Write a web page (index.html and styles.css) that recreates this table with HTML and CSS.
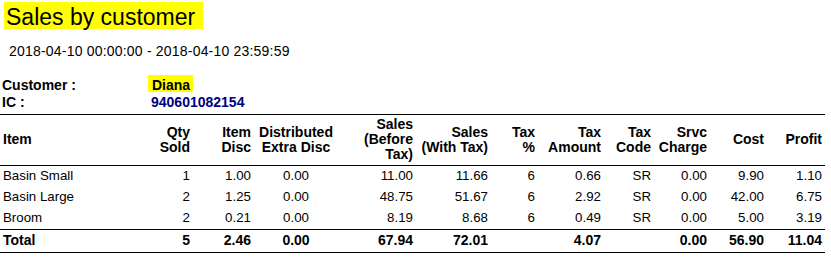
FILE: index.html
```html
<!DOCTYPE html>
<html>
<head>
<meta charset="utf-8">
<title>Sales by customer</title>
<link rel="stylesheet" href="styles.css">
</head>
<body>
<div class="report">
  <div class="title-row"><span class="title">Sales by customer</span></div>
  <div class="period">2018-04-10 00:00:00 - 2018-04-10 23:59:59</div>
  <div class="info">
    <div class="label">Customer :</div>
    <div class="value"><span class="hl">Diana</span></div>
    <div class="label">IC :</div>
    <div class="value ic">940601082154</div>
  </div>
  <table class="sales">
    <colgroup>
      <col class="c-item"><col class="c-qty"><col class="c-disc"><col class="c-dist">
      <col class="c-before"><col class="c-with"><col class="c-pct"><col class="c-amt">
      <col class="c-code"><col class="c-srvc"><col class="c-cost"><col class="c-profit">
    </colgroup>
    <thead>
      <tr>
        <th class="l">Item</th>
        <th>Qty<br>Sold</th>
        <th>Item<br>Disc</th>
        <th class="c">Distributed<br>Extra Disc</th>
        <th>Sales<br>(Before<br>Tax)</th>
        <th>Sales<br>(With Tax)</th>
        <th>Tax<br>%</th>
        <th>Tax<br>Amount</th>
        <th>Tax<br>Code</th>
        <th>Srvc<br>Charge</th>
        <th>Cost</th>
        <th>Profit</th>
      </tr>
    </thead>
    <tbody>
      <tr>
        <td class="l">Basin Small</td><td>1</td><td>1.00</td><td class="c">0.00</td>
        <td>11.00</td><td>11.66</td><td>6</td><td>0.66</td><td>SR</td><td>0.00</td><td>9.90</td><td>1.10</td>
      </tr>
      <tr>
        <td class="l">Basin Large</td><td>2</td><td>1.25</td><td class="c">0.00</td>
        <td>48.75</td><td>51.67</td><td>6</td><td>2.92</td><td>SR</td><td>0.00</td><td>42.00</td><td>6.75</td>
      </tr>
      <tr>
        <td class="l">Broom</td><td>2</td><td>0.21</td><td class="c">0.00</td>
        <td>8.19</td><td>8.68</td><td>6</td><td>0.49</td><td>SR</td><td>0.00</td><td>5.00</td><td>3.19</td>
      </tr>
    </tbody>
    <tfoot>
      <tr>
        <td class="l">Total</td><td>5</td><td>2.46</td><td class="c">0.00</td>
        <td>67.94</td><td>72.01</td><td></td><td>4.07</td><td></td><td>0.00</td><td>56.90</td><td>11.04</td>
      </tr>
    </tfoot>
  </table>
</div>
</body>
</html>
```
FILE: styles.css
```css
html, body {
  margin: 0;
  padding: 0;
  background: #ffffff;
}
body {
  font-family: "Liberation Sans", Arial, sans-serif;
  color: #000;
}
.report {
  width: 825px;
}
.title-row {
  padding: 2px 0 0 4px;
  height: 27px;
}
.title {
  display: inline-block;
  box-sizing: border-box;
  height: 27px;
  padding: 3px 8px 0 2px;
  line-height: 24px;
  font-size: 23px;
  background: #ffff00;
  vertical-align: top;
}
.period {
  margin-top: 14px;
  padding-left: 9px;
  font-size: 14px;
  line-height: 16px;
  letter-spacing: 0.2px;
}
.info {
  margin-top: 16px;
  display: grid;
  grid-template-columns: 148px 1fr;
  grid-auto-rows: 17px;
  font-size: 14px;
  font-weight: bold;
}
.label {
  box-sizing: border-box;
  height: 17px;
  padding: 3px 0 0 2px;
  line-height: 15px;
}
.value {
  box-sizing: border-box;
  height: 17px;
}
.hl {
  display: block;
  width: fit-content;
  box-sizing: border-box;
  height: 17px;
  padding: 3px 3px 0 4px;
  line-height: 15px;
  background: #ffff00;
}
.ic {
  padding: 3px 0 0 3px;
  line-height: 15px;
  color: #000080;
}
.sales {
  margin-top: 5px;
  width: 825px;
  table-layout: fixed;
  border-collapse: separate;
  border-spacing: 0;
}
.c-item { width: 140px; }
.c-qty { width: 53px; }
.c-disc { width: 61px; }
.c-dist { width: 84px; }
.c-before { width: 78px; }
.c-with { width: 75px; }
.c-pct { width: 47px; }
.c-amt { width: 66px; }
.c-code { width: 50px; }
.c-srvc { width: 56px; }
.c-cost { width: 57px; }
.c-profit { width: 58px; }

.sales th {
  font-size: 14px;
  font-weight: bold;
  line-height: 15px;
  padding: 2px 3px 3px 3px;
  text-align: right;
  vertical-align: middle;
  border-top: 1px solid #000;
  border-bottom: 1px solid #000;
  white-space: nowrap;
}
.sales td {
  font-size: 13.3px;
  line-height: 16px;
  padding: 2px 3px 3px 3px;
  text-align: right;
  white-space: nowrap;
}
.sales tfoot td {
  font-size: 14px;
  font-weight: bold;
  padding: 2px 3px 4px 3px;
  border-top: 1px solid #000;
  border-bottom: 1px solid #000;
}
.sales .l { text-align: left; }
.sales .c { text-align: center; }
```
